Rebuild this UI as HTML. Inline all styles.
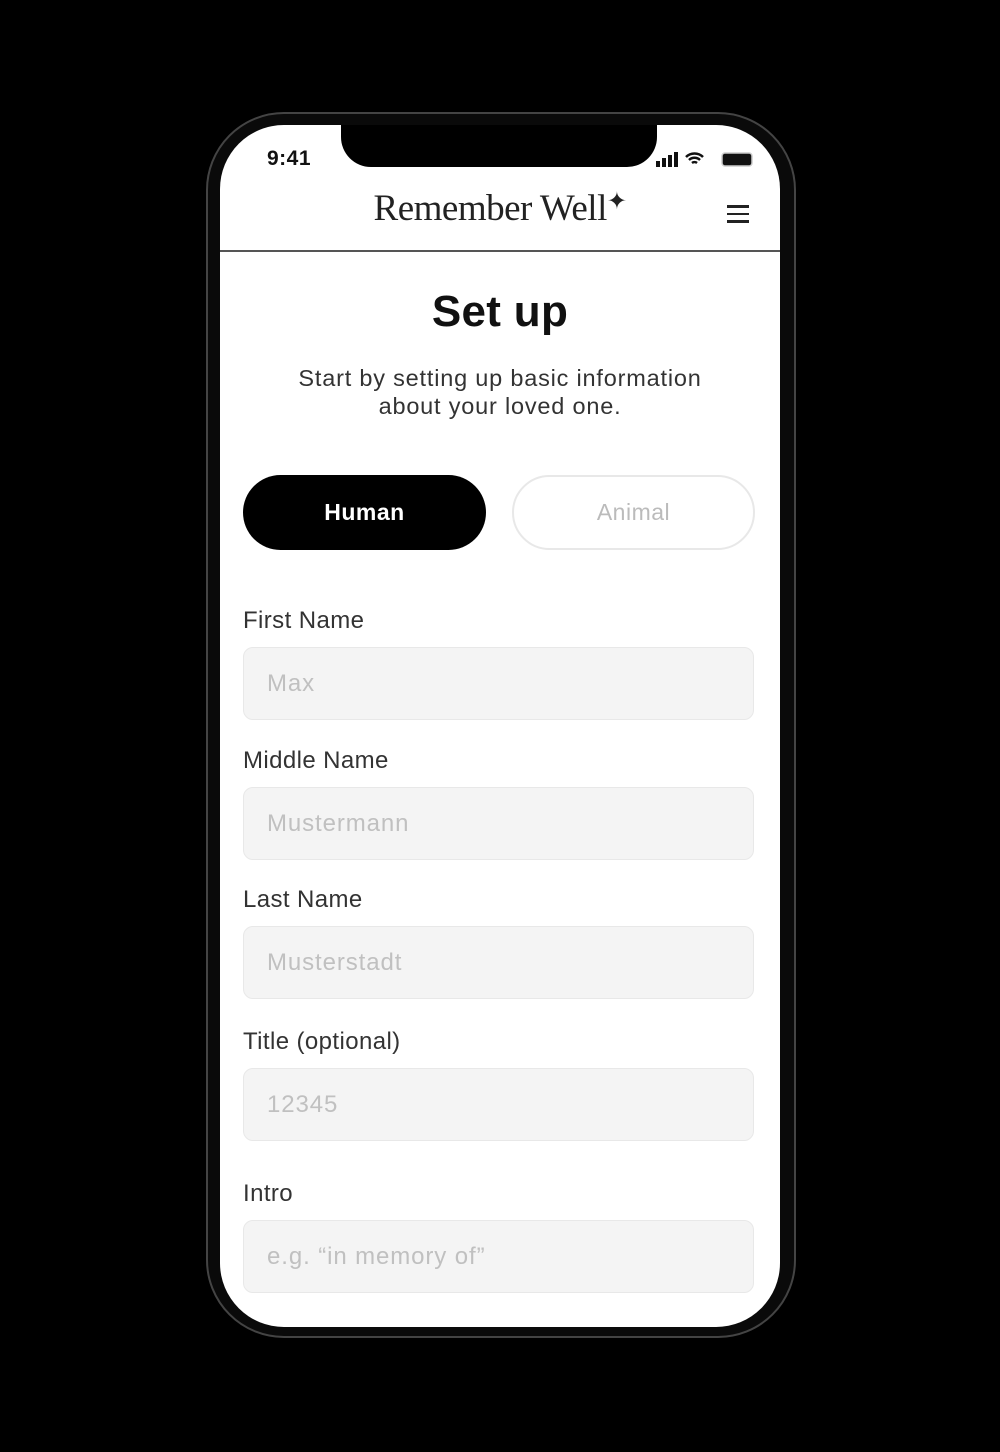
<!DOCTYPE html>
<html><head><meta charset="utf-8"><style>
*{margin:0;padding:0;box-sizing:border-box}
body{width:1000px;height:1452px;background:#000;position:relative;overflow:hidden;font-family:"Liberation Sans",sans-serif}
.frame{position:absolute;left:206px;top:112px;width:590px;height:1226px;border-radius:78px;background:#0a0a0a;border:2px solid #444}
.screen{position:absolute;left:220px;top:125px;width:560px;height:1202px;border-radius:64px;background:#fff;overflow:hidden}
.notch{position:absolute;left:121px;top:-2px;width:316px;height:44px;background:#000;border-radius:0 0 30px 30px}
.time{position:absolute;left:47px;top:22px;font-size:21px;font-weight:bold;color:#111;letter-spacing:0.5px}
.logo{position:absolute;left:0;width:560px;top:62px;text-align:center;font-family:"Liberation Serif",serif;font-size:37px;color:#222;letter-spacing:-0.5px}
.hr{position:absolute;left:0;top:125px;width:560px;height:2px;background:#555}
.menu{position:absolute;left:507px;top:80px;width:22px}
.menu i{display:block;height:2.5px;background:#222;margin-bottom:5px}
h1{position:absolute;left:0;width:560px;top:162px;text-align:center;font-size:44px;font-weight:bold;color:#111;letter-spacing:0.3px}
.sub{position:absolute;left:0;width:560px;top:239px;text-align:center;font-size:23.5px;line-height:28px;color:#333;letter-spacing:0.8px}
.btn{position:absolute;top:350px;width:243px;height:75px;border-radius:38px;text-align:center;line-height:75px;font-size:23px;letter-spacing:0.5px}
.lab{position:absolute;left:23px;font-size:24px;color:#333;letter-spacing:0.4px}
.inp{position:absolute;left:23px;width:511px;height:73px;background:#f4f4f4;border:1px solid #e8e8e8;border-radius:10px;padding-left:23px;line-height:72px;font-size:24px;color:#c0c0c0;letter-spacing:0.9px}
</style></head><body>
<div class="frame"></div>
<div class="screen">
<div class="notch"></div>
<div class="time">9:41</div>
<svg style="position:absolute;left:436px;top:26px" width="100" height="18">
<rect x="0" y="10" width="4" height="6" fill="#111"/><rect x="6" y="7" width="4" height="9" fill="#111"/><rect x="12" y="4" width="4" height="12" fill="#111"/><rect x="18" y="1" width="4" height="15" fill="#111"/>
<path d="M30 6a12 12 0 0 1 17 0M33 9a8 8 0 0 1 11 0M36 12a4 4 0 0 1 5 0" stroke="#111" stroke-width="2.5" fill="none"/>
<rect x="66" y="2" width="30" height="13" rx="3" fill="#111" stroke="#ccc" stroke-width="1.5"/>
</svg>
<div class="logo">Remember Well<span style="font-size:24px;vertical-align:top">✦</span></div>
<div class="menu"><i></i><i></i><i></i></div>
<div class="hr"></div>
<h1>Set up</h1>
<div class="sub">Start by setting up basic information<br>about your loved one.</div>
<div class="btn" style="left:23px;background:#000;color:#fff;font-weight:bold">Human</div>
<div class="btn" style="left:292px;border:2px solid #e8e8e8;color:#bbb;line-height:71px">Animal</div>
<div class="lab" style="top:482px">First Name</div><div class="inp" style="top:522px">Max</div>
<div class="lab" style="top:622px">Middle Name</div><div class="inp" style="top:662px">Mustermann</div>
<div class="lab" style="top:761px">Last Name</div><div class="inp" style="top:801px">Musterstadt</div>
<div class="lab" style="top:903px">Title (optional)</div><div class="inp" style="top:943px">12345</div>
<div class="lab" style="top:1055px">Intro</div><div class="inp" style="top:1095px">e.g. “in memory of”</div>
</div>
</body></html>
